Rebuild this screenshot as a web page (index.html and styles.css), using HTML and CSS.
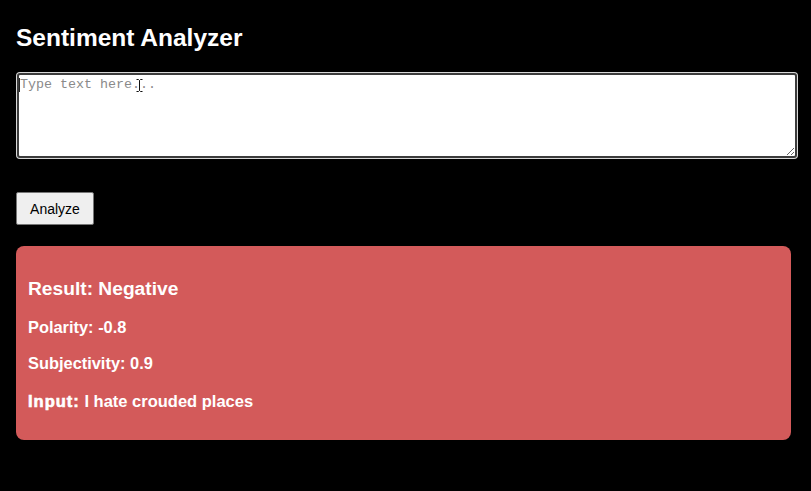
FILE: index.html
```html
<!DOCTYPE html>
<html lang="en">
<head>
<meta charset="utf-8">
<title>Sentiment Analyzer</title>
<link rel="stylesheet" href="styles.css">
</head>
<body>
<main class="app">
  <h2 class="title">Sentiment Analyzer</h2>
  <div class="input-wrap">
    <textarea class="text-input" placeholder="Type text here..."></textarea>
    <span class="caret"></span>
    <svg class="ibeam" width="7" height="13" viewBox="0 0 7 13" aria-hidden="true">
      <path d="M0.5 0.5h2l1 1 1-1h2M3.5 1.5v10M0.5 12.5h2l1-1 1 1h2" fill="none" stroke="#111" stroke-width="1"/>
    </svg>
  </div>
  <button class="analyze-btn" type="button">Analyze</button>
  <section class="result">
    <h3 class="result-title">Result: Negative</h3>
    <p class="metric">Polarity: -0.8</p>
    <p class="metric">Subjectivity: 0.9</p>
    <p class="input-line"><strong class="input-label">Input:</strong> <span class="input-text">I hate crouded places</span></p>
  </section>
</main>
</body>
</html>
```

FILE: styles.css
```css
html, body {
  margin: 0;
  padding: 0;
  background: #000;
}

.app {
  display: flex;
  flex-direction: column;
  align-items: flex-start;
  padding: 0 20px 0 16px;
  font-family: "Liberation Sans", Arial, sans-serif;
  color: #fff;
}

.title {
  margin: 24px 0 21px;
  font-size: 24.5px;
  line-height: 28px;
  font-weight: bold;
}

.input-wrap {
  position: relative;
  margin-left: 1px;
  width: 780px;
  height: 85px;
}

.text-input {
  display: block;
  box-sizing: border-box;
  width: 780px;
  height: 85px;
  margin: 0;
  padding: 2px 1px;
  border: 2px solid #3c3c3c;
  border-radius: 3px;
  box-shadow: 0 0 0 1px #d8d8d8;
  background: #fff;
  font-family: "Liberation Mono", "DejaVu Sans Mono", monospace;
  font-size: 13.33px;
  line-height: 15px;
  color: #000;
  outline: none;
  resize: vertical;
}

.text-input::placeholder {
  color: #8a8a8a;
}

.caret {
  position: absolute;
  left: 2px;
  top: 5px;
  width: 1px;
  height: 14px;
  background: #222;
}

.ibeam {
  position: absolute;
  left: 119px;
  top: 6px;
}

.analyze-btn {
  margin-top: 34px;
  box-sizing: border-box;
  width: 78px;
  height: 33px;
  padding: 0;
  background: #efefef;
  border: 1px solid #767676;
  border-radius: 2px;
  font-family: "Liberation Sans", Arial, sans-serif;
  font-size: 14px;
  color: #000;
}

.result {
  box-sizing: border-box;
  align-self: stretch;
  margin-top: 21px;
  height: 194px;
  padding: 32px 12px 0;
  background: #d35a5a;
  border-radius: 8px;
  color: #fff;
}

.result-title {
  margin: 0;
  font-size: 19.2px;
  line-height: 22px;
  font-weight: 700;
}

.metric {
  margin: 18px 0 0;
  font-size: 16.4px;
  line-height: 18px;
  font-weight: 700;
}

.metric + .metric {
  margin-top: 18px;
}

.input-line {
  margin: 19px 0 0;
  font-size: 16.5px;
  line-height: 20px;
  font-weight: 700;
}

.input-label {
  font-weight: 700;
  letter-spacing: 1px;
  -webkit-text-stroke: 0.6px #fff;
}

.input-text {
  font-weight: 700;
}
```
